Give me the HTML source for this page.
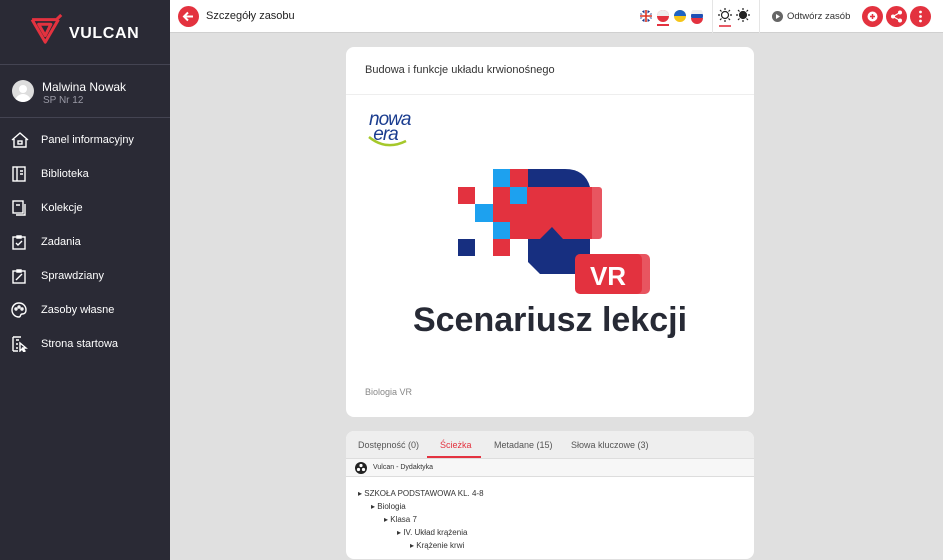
<!DOCTYPE html>
<html><head><meta charset="utf-8"><style>
*{margin:0;padding:0;box-sizing:border-box}
body{width:943px;height:560px;overflow:hidden;font-family:"Liberation Sans",sans-serif;background:#e0e0e0;position:relative}
.sb{position:absolute;left:0;top:0;width:170px;height:560px;background:#2a2a35;color:#fff}
.logo{height:65px;border-bottom:1px solid #444452;position:relative}
.user{height:53px;border-bottom:1px solid #444452;position:relative}
.av{position:absolute;left:12px;top:80px;width:22px;height:22px;border-radius:50%;background:#ddd;overflow:hidden}
.nav{position:absolute;left:0;width:170px;height:20px;font-size:11px;line-height:20px}
.nav span{position:absolute;left:41px}
.nav svg{position:absolute;left:11px;top:2px}
.top{position:absolute;left:170px;top:0;right:0;height:33px;background:#fff;border-bottom:1px solid #d0d0d0}
.card{position:absolute;left:346px;width:408px;background:#fff;border-radius:8px}
.rb{position:absolute;width:21px;height:21px;border-radius:50%;background:#e3323f}
</style></head><body>
<div class="sb">
 <div class="logo">
  <svg style="position:absolute;left:30px;top:13px" width="38" height="32" viewBox="0 0 40 34" fill="none" stroke="#e3323f" stroke-width="3.2" stroke-linejoin="round"><path d="M2 7 H28 L33 2 M2 7 L16 31 L30 7 M9 12 L16 24 L22 12 Z"/></svg>
  <div style="position:absolute;left:69px;top:25px;font-size:16px;font-weight:bold;letter-spacing:.6px">VULCAN</div>
 </div>
 <div class="user"></div>
 <div class="av"><div style="width:8px;height:8px;border-radius:50%;background:#fff;margin:5px auto 0"></div><div style="width:16px;height:10px;border-radius:8px 8px 0 0;background:#fff;margin:1px auto 0"></div></div>
 <div style="position:absolute;left:42px;top:80px;font-size:12px">Malwina Nowak</div>
 <div style="position:absolute;left:43px;top:95px;font-size:10px;color:#9a9aa6">SP Nr 12</div>
 <div class="nav" style="top:130px"><svg width="18" height="16" viewBox="0 0 18 16" fill="none" stroke="#fff" stroke-width="1.4"><path d="M1 8 L9 1 L17 8 M3 7 V15 H15 V7"/><rect x="7" y="9" width="4" height="3"/></svg><span>Panel informacyjny</span></div>
 <div class="nav" style="top:164px"><svg width="16" height="16" viewBox="0 0 16 16" fill="none" stroke="#fff" stroke-width="1.4"><rect x="2" y="1" width="12" height="14"/><path d="M6 1 V15 M9 5 H12 M9 8 H12"/></svg><span>Biblioteka</span></div>
 <div class="nav" style="top:198px"><svg width="16" height="16" viewBox="0 0 16 16" fill="none" stroke="#fff" stroke-width="1.4"><rect x="2" y="1" width="10" height="12"/><path d="M14 4 V15 H5 M5 5 H9"/></svg><span>Kolekcje</span></div>
 <div class="nav" style="top:232px"><svg width="16" height="16" viewBox="0 0 16 16" fill="none" stroke="#fff" stroke-width="1.4"><rect x="2" y="3" width="12" height="12"/><path d="M6 2 H10 V4 H6Z M5 9 L7 11 L11 7"/></svg><span>Zadania</span></div>
 <div class="nav" style="top:266px"><svg width="16" height="16" viewBox="0 0 16 16" fill="none" stroke="#fff" stroke-width="1.4"><rect x="2" y="3" width="12" height="12"/><path d="M6 2 H10 V4 H6Z M5 12 L11 6"/></svg><span>Sprawdziany</span></div>
 <div class="nav" style="top:300px"><svg width="16" height="16" viewBox="0 0 16 16" fill="none" stroke="#fff" stroke-width="1.4"><path d="M8 1 C3 1 1 5 1 8 C1 12 4 15 8 15 C10 15 9 12 11 12 C14 12 15 10 15 8 C15 4 12 1 8 1Z"/><circle cx="5" cy="7" r="1"/><circle cx="8" cy="5" r="1"/><circle cx="11" cy="7" r="1"/></svg><span>Zasoby własne</span></div>
 <div class="nav" style="top:334px"><svg width="18" height="16" viewBox="0 0 18 16" fill="none" stroke="#fff" stroke-width="1.4"><path d="M2 1 V15 M2 1 H10 M5 4 H8 M5 8 H7 M5 12 H7 M2 15 H7"/><path d="M9 7 L9 15 L11 13 L13 16 L14 15 L12 12 L15 12Z"/></svg><span>Strona startowa</span></div>
</div>

<div class="top">
 <div class="rb" style="left:8px;top:6px"><svg width="21" height="21" viewBox="0 0 21 21" fill="none" stroke="#fff" stroke-width="2"><path d="M15 10.5 H6 M10 6.5 L6 10.5 L10 14.5"/></svg></div>
 <div style="position:absolute;left:36px;top:10px;font-size:11px;color:#222">Szczegóły zasobu</div>
 <svg style="position:absolute;left:470px;top:10px" width="64" height="18" viewBox="0 0 64 18">
  <circle cx="6" cy="6" r="6" fill="#1f3a8a"/><path d="M1 2 L11 10 M11 2 L1 10" stroke="#fff" stroke-width="2"/><path d="M6 0 V12 M0 6 H12" stroke="#fff" stroke-width="3"/><path d="M6 0 V12 M0 6 H12" stroke="#d32" stroke-width="1.6"/>
  <circle cx="23" cy="6" r="6" fill="#e3323f"/><path d="M17 6 A6 6 0 0 1 29 6Z" fill="#eee"/><rect x="17" y="14" width="12" height="2" fill="#e3323f"/>
  <circle cx="40" cy="6" r="6" fill="#f5c518"/><path d="M34 6 A6 6 0 0 1 46 6Z" fill="#1e63c4"/>
  <circle cx="57" cy="6" r="6" fill="#1e4fb4"/><path d="M51 4 A6 6 0 0 1 63 4Z" fill="#eee"/><path d="M51 8 A6 6 0 0 0 63 8Z" fill="#e3323f"/>
 </svg>
 <div style="position:absolute;left:542px;top:0;width:1px;height:33px;background:#e5e5e5"></div>
 <svg style="position:absolute;left:548px;top:8px" width="36" height="20" viewBox="0 0 36 20" fill="none" stroke="#222" stroke-width="1.2">
  <circle cx="7" cy="7" r="3.5"/><path d="M7 0 V2 M7 12 V14 M0 7 H2 M12 7 H14 M2 2 L3.5 3.5 M10.5 10.5 L12 12 M2 12 L3.5 10.5 M10.5 3.5 L12 2"/>
  <circle cx="25" cy="7" r="3.5" fill="#222"/><path d="M25 0 V2 M25 12 V14 M18 7 H20 M30 7 H32 M20 2 L21.5 3.5 M28.5 10.5 L30 12 M20 12 L21.5 10.5 M28.5 3.5 L30 2"/>
  <path d="M1 18 H13" stroke="#e3323f" stroke-width="1.6"/>
 </svg>
 <div style="position:absolute;left:589px;top:0;width:1px;height:33px;background:#e5e5e5"></div>
 <svg style="position:absolute;left:602px;top:11px" width="11" height="11"><circle cx="5.5" cy="5.5" r="5.5" fill="#666"/><path d="M4 3 L8 5.5 L4 8Z" fill="#fff"/></svg>
 <div style="position:absolute;left:617px;top:11px;font-size:9.5px;color:#333">Odtwórz zasób</div>
 <div class="rb" style="left:692px;top:6px"><svg width="21" height="21"><circle cx="10.5" cy="10.5" r="5" fill="#fff"/><path d="M10.5 8 V13 M8 10.5 H13" stroke="#e3323f" stroke-width="1.5"/></svg></div>
 <div class="rb" style="left:716px;top:6px"><svg width="21" height="21" fill="#fff"><circle cx="14" cy="6.5" r="2"/><circle cx="7" cy="10.5" r="2"/><circle cx="14" cy="14.5" r="2"/><path d="M14 6.5 L7 10.5 L14 14.5" stroke="#fff" stroke-width="1.2" fill="none"/></svg></div>
 <div class="rb" style="left:740px;top:6px"><svg width="21" height="21" fill="#fff"><circle cx="10.5" cy="6" r="1.4"/><circle cx="10.5" cy="10.5" r="1.4"/><circle cx="10.5" cy="15" r="1.4"/></svg></div>
</div>

<div class="card" style="top:47px;height:370px">
 <div style="height:48px;border-bottom:1px solid #eee;padding:17px 0 0 19px;font-size:11px;color:#333">Budowa i funkcje układu krwionośnego</div>
 <div style="position:absolute;left:23px;top:65px;font-size:19px;font-style:italic;color:#1b3d8f;line-height:15px;letter-spacing:-1px">nowa<br>&nbsp;era</div>
 <svg style="position:absolute;left:22px;top:88px" width="40" height="14"><path d="M1 2 Q18 16 38 6" stroke="#a5c82a" stroke-width="2.5" fill="none"/></svg>
 <svg style="position:absolute;left:0;top:0" width="408" height="300" viewBox="346 47 408 300">
  <path d="M528 169 H565 Q585 169 590 187 L590 262 L578 274 H540 L528 262Z" fill="#172f80"/>
  <rect x="585" y="187" width="17" height="52" rx="3" fill="#e85560"/>
  <path d="M493 187 H592 V239 H563 L552 227 L540 239 H493Z" fill="#e3323f"/>
  <rect x="510" y="169" width="18" height="18" fill="#e3323f"/>
  <rect x="493" y="169" width="17" height="18" fill="#1da1ef"/>
  <rect x="510" y="187" width="17" height="17" fill="#1da1ef"/>
  <rect x="458" y="187" width="17" height="17" fill="#e3323f"/>
  <rect x="475" y="204" width="18" height="18" fill="#1da1ef"/>
  <rect x="493" y="222" width="17" height="17" fill="#1da1ef"/>
  <rect x="493" y="239" width="17" height="17" fill="#e3323f"/>
  <rect x="458" y="239" width="17" height="17" fill="#172f80"/>
  <rect x="588" y="254" width="62" height="40" rx="5" fill="#e85560"/>
  <rect x="575" y="254" width="67" height="40" rx="5" fill="#e3323f"/>
  <text x="608" y="285" text-anchor="middle" font-family="Liberation Sans" font-weight="bold" font-size="26" fill="#fff">VR</text>
 </svg>
 <div style="position:absolute;left:0;width:408px;top:254px;text-align:center;font-size:34px;font-weight:bold;color:#272a35">Scenariusz lekcji</div>
 <div style="position:absolute;left:19px;top:340px;font-size:9px;color:#888">Biologia VR</div>
</div>

<div class="card" style="top:431px;height:128px;overflow:hidden">
 <div style="height:27px;background:#eeeeee;font-size:9px;color:#555;position:relative">
  <span style="position:absolute;left:12px;top:9px">Dostępność (0)</span>
  <span style="position:absolute;left:94px;top:9px;color:#e3323f">Ścieżka</span>
  <div style="position:absolute;left:81px;top:25px;width:54px;height:2px;background:#e3323f"></div>
  <span style="position:absolute;left:148px;top:9px">Metadane (15)</span>
  <span style="position:absolute;left:225px;top:9px">Słowa kluczowe (3)</span>
 </div>
 <div style="height:19px;border-top:1px solid #ddd;border-bottom:1px solid #ddd;background:#f7f7f7;position:relative">
  <svg style="position:absolute;left:9px;top:3px" width="12" height="12"><circle cx="6" cy="6" r="6" fill="#222"/><circle cx="6" cy="3.5" r="1.6" fill="#fff"/><circle cx="3.5" cy="7.5" r="1.6" fill="#fff"/><circle cx="8.5" cy="7.5" r="1.6" fill="#fff"/></svg>
  <span style="position:absolute;left:27px;top:5px;font-size:7px;color:#333">Vulcan - Dydaktyka</span>
 </div>
 <div style="font-size:8px;color:#333;position:relative">
  <div style="position:absolute;left:12px;top:12px">▸ SZKOŁA PODSTAWOWA KL. 4-8</div>
  <div style="position:absolute;left:25px;top:25px">▸ Biologia</div>
  <div style="position:absolute;left:38px;top:38px">▸ Klasa 7</div>
  <div style="position:absolute;left:51px;top:51px">▸ IV. Układ krążenia</div>
  <div style="position:absolute;left:64px;top:64px">▸ Krążenie krwi</div>
 </div>
</div>
</body></html>
